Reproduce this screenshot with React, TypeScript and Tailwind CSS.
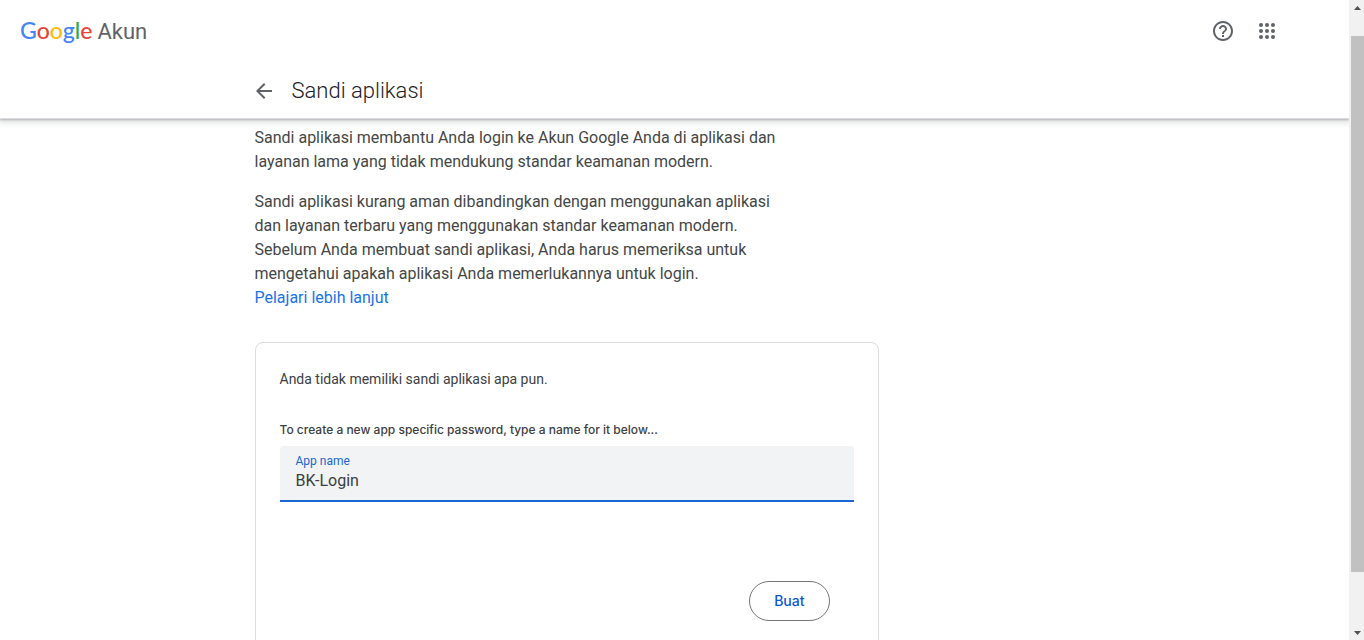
import { useState } from 'react';

function GoogleAccountLogo() {
  return (
    <a href="#" className="flex items-baseline gap-[5px]" aria-label="Google Akun">
      <span className="font-[Lato,sans-serif] text-[23px] leading-8 font-medium">
        <span className="text-[#4285f4]">G</span>
        <span className="text-[#ea4335]">o</span>
        <span className="text-[#fbbc05]">o</span>
        <span className="text-[#4285f4]">g</span>
        <span className="text-[#34a853]">l</span>
        <span className="text-[#ea4335]">e</span>
      </span>
      <span className="text-[22px] leading-8 text-[#5f6368]">Akun</span>
    </a>
  );
}

function HelpIcon() {
  return (
    <svg viewBox="0 0 24 24" className="size-6 fill-current" aria-hidden="true">
      <path d="M11 18h2v-2h-2v2zm1-16C6.48 2 2 6.48 2 12s4.48 10 10 10 10-4.48 10-10S17.52 2 12 2zm0 18c-4.41 0-8-3.59-8-8s3.59-8 8-8 8 3.59 8 8-3.59 8-8 8zm0-14c-2.21 0-4 1.79-4 4h2c0-1.1.9-2 2-2s2 .9 2 2c0 2-3 1.75-3 5h2c0-2.25 3-2.5 3-5 0-2.21-1.79-4-4-4z" />
    </svg>
  );
}

function AppsIcon() {
  return (
    <svg viewBox="0 0 24 24" className="size-6 fill-current" aria-hidden="true">
      {[6, 12, 18].map((y) => [6, 12, 18].map((x) => <circle key={`${x}-${y}`} cx={x} cy={y} r="2" />))}
    </svg>
  );
}

function BackIcon() {
  return (
    <svg viewBox="0 0 24 24" className="size-6 fill-current" aria-hidden="true">
      <path d="M20 11H7.83l5.59-5.59L12 4l-8 8 8 8 1.41-1.41L7.83 13H20v-2z" />
    </svg>
  );
}

function Scrollbar() {
  return (
    <div className="relative z-20 flex w-[15px] shrink-0 flex-col items-end bg-[#f1f1f1]" aria-hidden="true">
      <svg viewBox="0 0 13 36" className="h-9 w-[13px] shrink-0 fill-[#505050]">
        <path d="M3 10 6.5 6 10 10z" />
      </svg>
      <div className="w-[13px] grow bg-[#c1c1c1]" />
      <svg viewBox="0 0 13 68" className="h-[68px] w-[13px] shrink-0 fill-[#505050]">
        <path d="M3 59h7l-3.500 4z" />
      </svg>
    </div>
  );
}

export default function App() {
  const [name, setName] = useState('BK-Login');
  return (
    <div className="flex h-screen overflow-hidden bg-white font-[Roboto,sans-serif] text-[#3c4043]">
      <div className="flex min-w-0 grow flex-col">
        <header className="relative z-10 shrink-0 border-b border-[#dadce0] bg-white shadow-[0_1px_2px_0_rgba(60,64,67,0.3),0_2px_6px_2px_rgba(60,64,67,0.15)]">
          <div className="flex h-[62px] items-center justify-between pr-[62px] pl-5">
            <GoogleAccountLogo />
            <div className="flex gap-1 text-[#5f6368]">
              <button type="button" aria-label="Bantuan" className="grid size-10 place-items-center rounded-full">
                <HelpIcon />
              </button>
              <button type="button" aria-label="Aplikasi Google" className="grid size-10 place-items-center rounded-full">
                <AppsIcon />
              </button>
            </div>
          </div>
          <div className="mx-auto flex max-w-[840px] items-center gap-4 pt-[15px] pb-[13px]">
            <a href="#" aria-label="Kembali" className="-ml-1 pl-px text-[#5f6368]">
              <BackIcon />
            </a>
            <h1 className="text-[22px] leading-7 font-light text-[#202124]">Sandi aplikasi</h1>
          </div>
        </header>

        <main className="mx-auto w-full max-w-[840px] pt-[7px]">
          <div className="max-w-[560px] space-y-4 text-base leading-6 text-[#444746]">
            <p>
              Sandi aplikasi membantu Anda login ke Akun Google Anda di aplikasi dan
              <br />
              layanan lama yang tidak mendukung standar keamanan modern.
            </p>
            <p>
              Sandi aplikasi kurang aman dibandingkan dengan menggunakan aplikasi
              <br />
              dan layanan terbaru yang menggunakan standar keamanan modern.
              <br />
              Sebelum Anda membuat sandi aplikasi, Anda harus memeriksa untuk
              <br />
              mengetahui apakah aplikasi Anda memerlukannya untuk login.
              <br />
              <a href="#" className="text-[#1a73e8]">
                Pelajari lebih lanjut
              </a>
            </p>
          </div>

          <form
            className="mt-8 max-w-[624px] rounded-lg border border-[#dadce0] p-6 pb-12"
            onSubmit={(e) => e.preventDefault()}
          >
            <p className="text-sm leading-6">Anda tidak memiliki sandi aplikasi apa pun.</p>
            <p className="mt-[27px] font-[Inter,sans-serif] text-xs leading-6 font-medium">
              To create a new app specific password, type a name for it below...
            </p>
            <div className="mt-1 flex h-14 flex-col rounded-t border-b-2 border-[#1967d2] bg-[#f1f3f4] px-4 pt-[7px]">
              <label htmlFor="app-name" className="text-xs leading-4 text-[#1967d2]">
                App name
              </label>
              <input
                id="app-name"
                type="text"
                value={name}
                onChange={(e) => setName(e.target.value)}
                className="h-6 w-full bg-transparent text-base outline-none"
              />
            </div>
            <div className="mt-[79px] flex justify-end pr-6">
              <button
                type="submit"
                className="h-10 rounded-full border border-[#747775] px-6 font-[Inter,sans-serif] text-sm font-medium text-[#0b57d0]"
              >
                Buat
              </button>
            </div>
          </form>
        </main>
      </div>
      <Scrollbar />
    </div>
  );
}
